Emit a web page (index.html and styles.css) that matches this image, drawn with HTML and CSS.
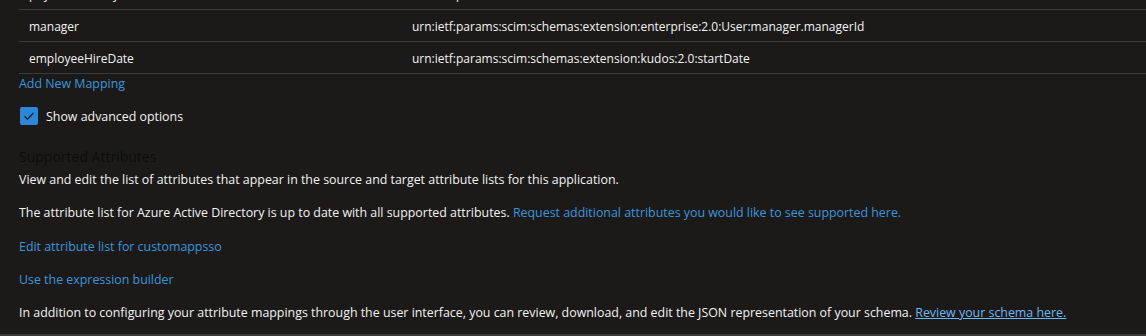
FILE: index.html
```html
<!DOCTYPE html>
<html lang="en">
<head>
    <meta charset="UTF-8">
    <meta name="viewport" content="width=device-width, initial-scale=1.0">
    <title>Attribute Mapping</title>
    <link rel="stylesheet" href="styles.css">
</head>
<body>
    <div class="page">
        <div class="mappings">
            <div class="mapping-row">
                <div class="cell source">physicalDeliveryOfficeName</div>
                <div class="cell target">urn:ietf:params:scim:schemas:core:2.0:User:title</div>
            </div>
            <div class="mapping-row">
                <div class="cell source">manager</div>
                <div class="cell target">urn:ietf:params:scim:schemas:extension:enterprise:2.0:User:manager.managerId</div>
            </div>
            <div class="mapping-row">
                <div class="cell source">employeeHireDate</div>
                <div class="cell target">urn:ietf:params:scim:schemas:extension:kudos:2.0:startDate</div>
            </div>
        </div>

        <a class="link add-mapping" href="#">Add New Mapping</a>

        <label class="checkbox">
            <span class="box">
                <svg width="12" height="12" viewBox="0 0 12 12"><path d="M1.5 6.3 L4.4 9.1 L10.5 3" fill="none" stroke="#1b1a19" stroke-width="1.2"/></svg>
            </span>
            Show advanced options
        </label>

        <h2 class="section-title">Supported Attributes</h2>
        <p class="first">View and edit the list of attributes that appear in the source and target attribute lists for this application.</p>
        <p>The attribute list for Azure Active Directory is up to date with all supported attributes. <a class="link" href="#">Request additional attributes you would like to see supported here.</a></p>
        <p><a class="link" href="#">Edit attribute list for customappsso</a></p>
        <p><a class="link" href="#">Use the expression builder</a></p>
        <p>In addition to configuring your attribute mappings through the user interface, you can review, download, and edit the JSON representation of your schema. <a class="link visited" href="#">Review your schema here.</a></p>
    </div>
    <div class="footer-line"></div>
</body>
</html>
```

FILE: styles.css
```css
body {
    margin: 0;
    background-color: #1b1a19;
    color: #f3f2f1;
    font-family: "Open Sans", "Noto Sans", sans-serif;
    font-size: 12.4px;
}
.page {
    padding-left: 19px;
    height: 334px;
    overflow: hidden;
}
.mappings {
    margin-top: -22px;
    font-size: 12px;
}
.mapping-row {
    display: flex;
    box-sizing: border-box;
    height: 32px;
    padding-top: 2px;
    align-items: center;
    border-bottom: 1px solid #3b3a39;
}
.cell {
    padding-left: 10px;
    white-space: nowrap;
}
.cell.source {
    width: 373px;
}
.link {
    color: #3a96dd;
    text-decoration: none;
}
.link.visited {
    color: #6cb8f6;
    text-decoration: underline;
}
.add-mapping {
    display: block;
    line-height: 20px;
}
.checkbox {
    display: flex;
    align-items: center;
    gap: 8px;
    margin-top: 13px;
    height: 18px;
    padding-left: 1px;
}
.box {
    width: 18px;
    height: 18px;
    border-radius: 2px;
    background-color: #2b88d8;
    display: flex;
    align-items: center;
    justify-content: center;
}
.section-title {
    margin: 23px 0 0;
    font-size: 14px;
    font-weight: normal;
    line-height: 18px;
    color: #0d0d0d;
}
p {
    margin: 0;
    line-height: 18px;
    margin-top: 15.3px;
}
p.first {
    margin-top: 5px;
}
.footer-line {
    height: 2px;
    background-color: #3b3a39;
}
```
